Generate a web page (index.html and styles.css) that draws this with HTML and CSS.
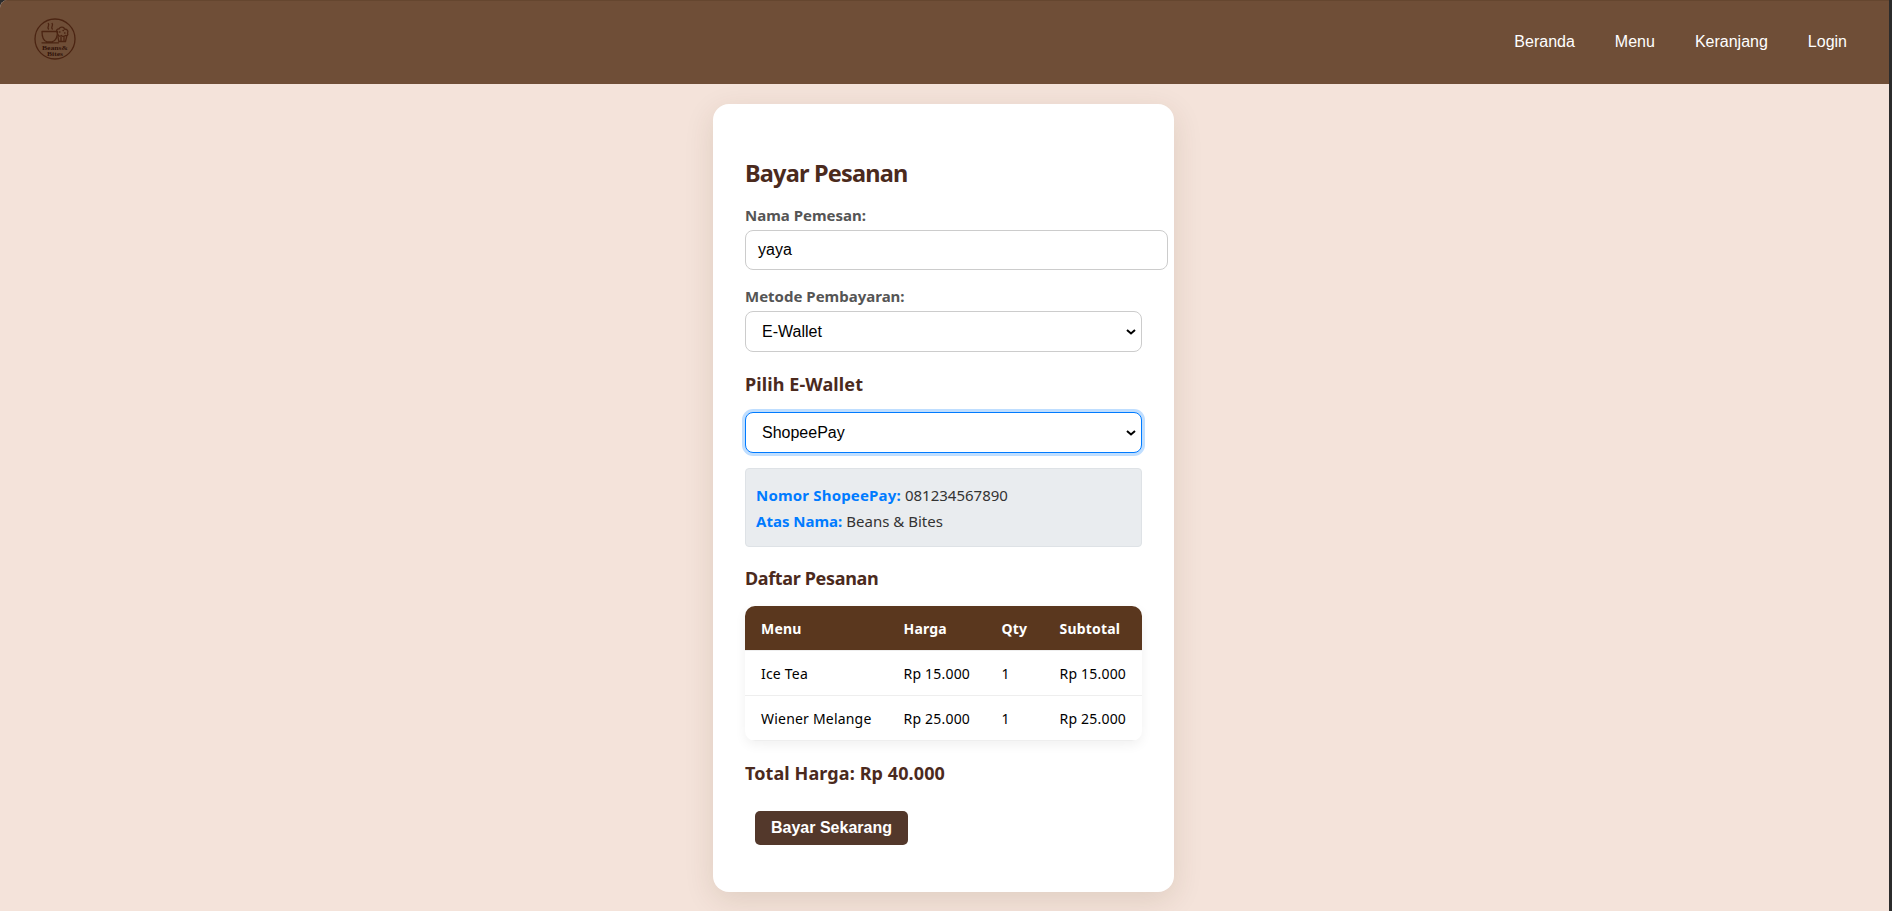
FILE: index.html
```html
<!DOCTYPE html>
<html lang="id">
<head>
<meta charset="utf-8">
<title>Bayar Pesanan</title>
<link rel="stylesheet" href="styles.css">
</head>
<body>
<div class="page">
  <header class="navbar">
    <svg class="logo" viewBox="0 0 42 42" role="img" aria-label="Beans &amp; Bites">
      <g fill="none" stroke="#4b2412" stroke-width="1.3" stroke-linecap="round" stroke-linejoin="round">
        <circle cx="21" cy="21" r="20"/>
        <path d="M8 13.5H23.500C23.500 19 21.500 23 18 23.800H13C9.500 23 8 19 8 13.500ZM8 24.800H24.500"/>
        <path d="M14.500 11C12.500 9 16 7.500 14.300 5.500M18.300 11C16.300 9 19.800 7.500 18.100 5.500"/>
        <path d="M23.500 15C21.500 13 23 10.500 25 11C26 8.500 30 8.500 30.500 11C33.500 11 34.500 13.500 33.500 15C34.500 17 33 18.300 31.500 17.500C30 19 28 18.500 27.500 17.500C26 18.800 24 18 24 16.500M24 19L24.800 23.500H31.500L32.800 18M27 19.500V23.500M30 19.500V23.500"/>
        <path d="M25.500 14H26M29 12.500H29.500M30.500 15H31"/>
      </g>
      <g class="logo-text"><text x="21" y="32" textLength="26" lengthAdjust="spacingAndGlyphs">Beans&amp;</text><text x="21" y="38" textLength="16" lengthAdjust="spacingAndGlyphs">Bites</text></g>
    </svg>
    <nav class="links"><a>Beranda</a><a>Menu</a><a>Keranjang</a><a>Login</a></nav>
  </header>
  <main class="card">
    <h2 class="title">Bayar Pesanan</h2>
    <label class="label label-name">Nama Pemesan:</label>
    <div class="control input">yaya</div>
    <label class="label label-method">Metode Pembayaran:</label>
    <div class="control select">E-Wallet<svg class="chevron" viewBox="0 0 10 6"><path d="M1 1L5 4.500L9 1"/></svg></div>
    <h3 class="heading heading-wallet">Pilih E-Wallet</h3>
    <div class="control select focused">ShopeePay<svg class="chevron" viewBox="0 0 10 6"><path d="M1 1L5 4.500L9 1"/></svg></div>
    <div class="info">
      <div class="info-row"><b class="key-number">Nomor ShopeePay:</b><span>081234567890</span></div>
      <div class="info-row"><b>Atas Nama:</b><span>Beans &amp; Bites</span></div>
    </div>
    <h3 class="heading heading-list">Daftar Pesanan</h3>
    <div class="orders">
      <div class="row head"><span>Menu</span><span>Harga</span><span>Qty</span><span>Subtotal</span></div>
      <div class="row"><span>Ice Tea</span><span>Rp 15.000</span><span>1</span><span>Rp 15.000</span></div>
      <div class="row"><span>Wiener Melange</span><span>Rp 25.000</span><span>1</span><span>Rp 25.000</span></div>
    </div>
    <h3 class="heading heading-total">Total Harga: Rp 40.000</h3>
    <button class="pay">Bayar Sekarang</button>
  </main>
</div>
</body>
</html>
```
FILE: styles.css
```css
* { box-sizing: border-box; }
body { margin: 0; background: #2b2b2b; overflow: hidden; }
.page {
  width: 1889px; height: 911px; overflow: hidden;
  background: #f4e3da; border-top-left-radius: 8px;
  font-family: "Noto Sans", sans-serif;
}
.navbar {
  height: 84px; display: flex; justify-content: space-between; align-items: flex-start;
  padding: 17px 42px 0 34px; background: #6f4e37; border-top: 1px solid #65462f;
}
.logo { width: 42px; height: 42px; }
.logo-text { font: bold 7px "Liberation Serif", serif; fill: #32130a; text-anchor: middle; }
.links { display: flex; gap: 40px; padding-top: 15px; font: 16px/18px "Liberation Sans", Arial, sans-serif; color: #fff; }
.card {
  width: 461px; height: 788px; margin: 20px 0 0 713px; padding: 53px 32px 0;
  display: flex; flex-direction: column; background: #fff; border-radius: 16px;
  box-shadow: 0 8px 30px rgba(75, 46, 20, .12);
}
.title { margin: 0 0 16px; font-size: 23.500px; line-height: 32px; color: #4b2a1d; letter-spacing: -.8px; white-space: nowrap; }
.label { display: block; margin-bottom: 5px; font-size: 15px; font-weight: bold; line-height: 20px; color: #555; white-space: nowrap; }
.control {
  display: flex; align-items: center; justify-content: space-between; flex: none;
  border: 1px solid #ccc; border-radius: 8px; background: #fff;
  font: 16px/18px "Liberation Sans", Arial, sans-serif; color: #000;
}
.input { width: 423px; height: 40px; padding: 0 12px; margin-bottom: 16px; }
.select { height: 41px; padding: 0 5px 0 16px; }
.chevron { width: 10px; height: 6px; fill: none; stroke: #000; stroke-width: 2; }
.focused { border-color: #007bff; box-shadow: 0 0 0 3px rgba(0, 123, 255, .25); }
.heading { margin: 0; font-size: 18px; line-height: 24px; color: #4b2a1d; white-space: nowrap; }
.heading-wallet { margin: 20px 0 16px; letter-spacing: .1px; }
.heading-list { margin: 19px 0 16px; letter-spacing: -.35px; }
.heading-total { margin: 20px 0 26px; letter-spacing: .1px; }
.info {
  height: 79px; margin-top: 15px; padding: 13px 10px 0;
  background: #e9ecef; border: 1px solid #dee2e6; border-radius: 4px;
  font-size: 15px; line-height: 26px; color: #333;
}
.info-row { display: flex; gap: 4px; white-space: nowrap; }
.info b { color: #007bff; }
.info .key-number { letter-spacing: .18px; }
.orders { border-radius: 10px; overflow: hidden; box-shadow: 0 4px 12px rgba(0, 0, 0, .06); }
.row {
  display: grid; grid-template-columns: 142.500px 98px 58px 1fr; padding-left: 16px;
  height: 45px; line-height: 46px; border-bottom: 1px solid #eee;
  font-size: 14px; letter-spacing: .2px; color: #000; white-space: nowrap;
}
.head { font-weight: bold; color: #fff; background: #5a371e; background-clip: padding-box; }
.pay {
  width: 153px; height: 34px; margin-left: 10px; padding: 0; border: 0; border-radius: 5px;
  background: #53382b; color: #fff; font: bold 16px/18px "Liberation Sans", Arial, sans-serif;
}
```
